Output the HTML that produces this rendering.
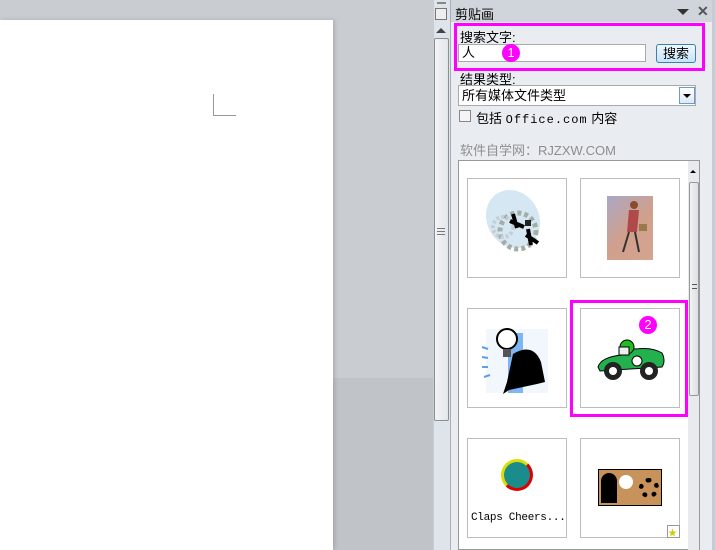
<!DOCTYPE html><html><head><meta charset="utf-8"><style>
*{margin:0;padding:0;box-sizing:border-box}
body{width:715px;height:550px;overflow:hidden;position:relative;background:#c9ccd1;font-family:"Liberation Sans","Noto Sans CJK SC",sans-serif;font-size:12px;color:#000}
.a{position:absolute}
.t{border:1px solid #bdbdbd;background:#fff}
.pk{border:3px solid #f0f;}
.badge{background:#f0f;color:#fff;border-radius:50%;width:18px;height:18px;text-align:center;font-size:13px;line-height:18px}
</style></head><body>
<div class="a" style="left:0;top:378px;width:433px;height:172px;background:#c0c3c8"></div>
<div class="a" style="left:0;top:20px;width:333px;height:530px;background:#fff;box-shadow:2px 0 4px rgba(0,0,0,.15)"></div>
<div class="a" style="left:213px;top:94px;width:1px;height:22px;background:#999"></div>
<div class="a" style="left:213px;top:115px;width:23px;height:1px;background:#999"></div>
<!-- left scrollbar -->
<div class="a" style="left:433px;top:0;width:17px;height:550px;background:#dfe3ea;border-left:1px solid #c7cbd2"></div>
<div class="a" style="left:437px;top:2px;width:9px;height:2px;background:#888"></div>
<div class="a" style="left:435px;top:8px;width:12px;height:12px;border:1px solid #777;background:#eee"></div>
<div class="a" style="left:436px;top:28px;width:0;height:0;border-left:5px solid transparent;border-right:5px solid transparent;border-bottom:5px solid #444"></div>
<div class="a" style="left:434px;top:38px;width:15px;height:383px;background:linear-gradient(90deg,#f3f4f6,#e2e5ea);border:1px solid #8a8f96;border-radius:2px"></div>
<div class="a" style="left:437px;top:228px;width:8px;height:7px;border-top:1px solid #777;border-bottom:1px solid #777"><div style="margin-top:2px;height:1px;background:#777"></div></div>
<!-- panel -->
<div class="a" style="left:450px;top:0;width:265px;height:550px;background:#e9ecf1;border-left:1px solid #a9aeb6;border-right:3px solid #c8ccd2"></div>
<div class="a" style="left:451px;top:0;width:261px;height:22px;background:#d0d5dc"></div>
<div class="a" style="left:455px;top:4px;font-size:13px">剪贴画</div>
<div class="a" style="left:677px;top:9px;border-left:6px solid transparent;border-right:6px solid transparent;border-top:6px solid #333"></div>
<div class="a" style="left:697px;top:3px;font-size:14px;font-weight:bold;color:#555">✕</div>
<div class="a pk" style="left:454px;top:23px;width:251px;height:48px"></div>
<div class="a" style="left:460px;top:27px;font-size:13px">搜索文字:</div>
<div class="a t" style="left:458px;top:44px;width:188px;height:18px;border-color:#a9a9a9;font-size:13px;padding-left:3px;line-height:15px">人</div>
<div class="a badge" style="left:502px;top:44px">1</div>
<div class="a" style="left:656px;top:44px;width:40px;height:19px;border:1px solid #3c7fb1;border-radius:3px;background:linear-gradient(#f0f7fd,#c6e3f7);text-align:center;font-size:13px;line-height:17px">搜索</div>
<div class="a" style="left:460px;top:69px;font-size:13px">结果类型:</div>
<div class="a t" style="left:458px;top:85px;width:238px;height:21px;border-color:#a9a9a9;font-size:13px;padding-left:3px;line-height:19px">所有媒体文件类型</div>
<div class="a" style="left:679px;top:87px;width:16px;height:17px;border:1px solid #6f9bc3;background:linear-gradient(#fff,#dde9f5)"><div style="margin:6px 0 0 3px;border-left:4px solid transparent;border-right:4px solid transparent;border-top:4px solid #000;width:0"></div></div>
<div class="a" style="left:459px;top:110px;width:12px;height:12px;border:1px solid #888;background:#f4f4f4"></div>
<div class="a" style="left:476px;top:108px;font-size:13px;white-space:nowrap">包括 <span style="font-family:'Liberation Mono',monospace;font-size:12px;letter-spacing:1px">Office.com</span> 内容</div>
<div class="a" style="left:460px;top:140px;font-size:13px;color:#8e8e8e">软件自学网：RJZXW.COM</div>
<!-- results -->
<div class="a" style="left:458px;top:160px;width:242px;height:390px;background:#fff;border:1px solid #999"></div>
<div class="a" style="left:688px;top:161px;width:11px;height:389px;background:#e8eaed"></div>
<div class="a" style="left:690px;top:170px;border-left:3px solid transparent;border-right:3px solid transparent;border-bottom:3px solid #000"></div>
<div class="a" style="left:689px;top:182px;width:10px;height:214px;background:linear-gradient(90deg,#f2f3f5,#dcdfe4);border:1px solid #999;border-radius:2px"></div>
<div class="a" style="left:692px;top:284px;width:5px;height:5px;border-top:1px solid #555;border-bottom:1px solid #555"></div>
<div class="a t" style="left:467px;top:178px;width:100px;height:100px">
<svg width="98" height="98"><ellipse cx="45" cy="40" rx="26" ry="30" fill="#d6e7f4" transform="rotate(-30 45 40)"/><circle cx="50" cy="52" r="18" fill="none" stroke="#a3aea7" stroke-width="5" stroke-dasharray="4 3"/><circle cx="35" cy="48" r="10" fill="none" stroke="#c5cdd5" stroke-width="4" stroke-dasharray="3 2"/><path d="M42 42 l14 6 M45 35 l4 14 M58 56 l12 8 M60 50 l3 16" stroke="#000" stroke-width="4"/><rect x="57" y="41" width="6" height="6" fill="#222"/></svg></div>
<div class="a t" style="left:580px;top:178px;width:100px;height:100px"><div style="margin:17px 0 0 26px;width:46px;height:64px;background:linear-gradient(135deg,#a9a7c6,#cfa08d 50%,#d6a48f)"><svg width="46" height="64"><circle cx="27" cy="9" r="4" fill="#8b4a2b"/><path d="M22 14 l10 0 l-2 22 l-10 0z" fill="#b04a4a"/><path d="M22 36 l-6 20 M28 36 l4 20" stroke="#333" stroke-width="2"/><rect x="32" y="28" width="8" height="7" fill="#9a7a4a"/></svg></div></div>
<div class="a t" style="left:467px;top:308px;width:100px;height:100px"><svg width="98" height="98"><rect x="18" y="20" width="62" height="64" fill="#f2f7fd"/><rect x="40" y="24" width="15" height="60" fill="#7db6f3"/><circle cx="39" cy="30" r="10" fill="#fff" stroke="#000" stroke-width="2"/><rect x="35" y="40" width="8" height="8" fill="#555"/><path d="M45 45 q20-12 28 8 l4 20 l-8 2 l-28 6 l-6 4 l4-12 z" fill="#000"/><path d="M14 38 l6 2 M14 48 l6 1 M14 58 l6 0 M16 68 l6-2" stroke="#5aa0e8" stroke-width="2"/></svg></div>
<div class="a t" style="left:580px;top:308px;width:100px;height:100px"><svg width="98" height="98"><path d="M17 58 q3-10 24-12 q6-8 14-6 q16-2 26 4 q4 8 0 14 l-62 4z" fill="#22b14c" stroke="#000"/><circle cx="46" cy="38" r="7" fill="#2b2" stroke="#000"/><rect x="38" y="38" width="10" height="8" fill="#eee" stroke="#000"/><circle cx="56" cy="52" r="5" fill="#fff" stroke="#000"/><circle cx="32" cy="62" r="9" fill="#222"/><circle cx="32" cy="62" r="4" fill="#fff"/><circle cx="68" cy="62" r="9" fill="#222"/><circle cx="68" cy="62" r="4" fill="#fff"/></svg></div>
<div class="a pk" style="left:570px;top:300px;width:118px;height:117px"></div>
<div class="a badge" style="left:639px;top:316px">2</div>
<div class="a t" style="left:467px;top:438px;width:100px;height:100px"><div style="margin:20px 0 0 33px;width:32px;height:32px;border-radius:50%;border:3px solid #dd0;border-right-color:#d00;border-bottom-color:#d00;background:#1a8c8c"></div><div style="position:absolute;left:3px;top:73px;font-family:'Liberation Mono',monospace;font-size:11px;white-space:nowrap;letter-spacing:-0.3px">Claps Cheers...</div></div>
<div class="a t" style="left:580px;top:438px;width:100px;height:100px"><div style="margin:30px 0 0 17px;width:64px;height:37px;background:#c8935a;border:1px solid #000;position:relative"><div style="position:absolute;left:2px;top:3px;width:16px;height:30px;background:#000;border-radius:8px 8px 0 0"></div><div style="position:absolute;left:40px;top:8px;width:20px;height:20px;border-radius:50%;border:5px dotted #000;background:#c8935a"></div><div style="position:absolute;left:20px;top:5px;width:14px;height:14px;border-radius:50%;background:#fff"></div></div><div style="position:absolute;left:86px;top:86px;width:13px;height:13px;border:1px solid #999;background:#fff;font-size:9px;color:#cc0">★</div></div>
</body></html>
